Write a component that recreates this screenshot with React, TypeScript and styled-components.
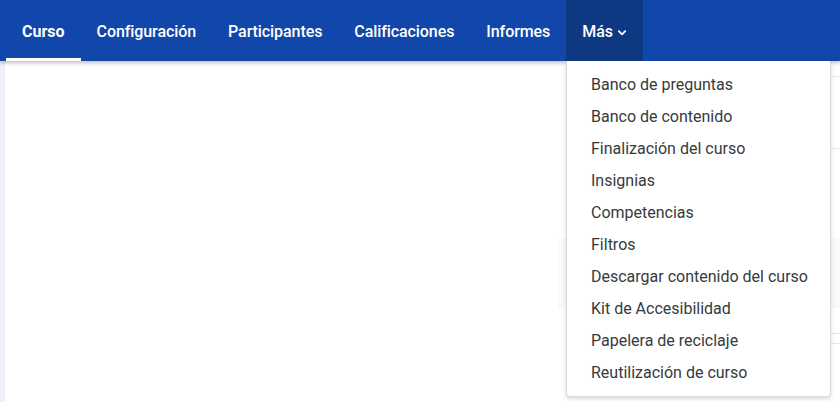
import React from "react";
import styled, { createGlobalStyle } from "styled-components";

const Global = createGlobalStyle`
  html, body { margin: 0; padding: 0; background: #fff; }
  body { font-family: Roboto, "Liberation Sans", sans-serif; }
  * { box-sizing: border-box; }
`;

const Page = styled.div`
  width: 840px;
  height: 402px;
  display: flex;
  flex-direction: column;
  overflow: hidden;
`;

const NavBar = styled.nav`
  height: 61px;
  background: #1147aa;
  display: flex;
  align-items: stretch;
  padding-left: 6px;
  position: relative;
  z-index: 2;
  box-shadow: 0 2px 4px rgba(0, 0, 0, 0.25);
`;

const Tab = styled.div<{ $active?: boolean; $open?: boolean }>`
  position: relative;
  display: flex;
  align-items: center;
  gap: 4px;
  padding: 1px 16px 0;
  color: #fff;
  font-size: 16px;
  letter-spacing: ${(p) => (p.$active ? "0" : "-0.08px")};
  font-weight: ${(p) => (p.$active ? 700 : 500)};
  background: ${(p) => (p.$open ? "#0e3882" : "transparent")};
  ${(p) =>
    p.$active &&
    `&::after {
      content: "";
      position: absolute;
      left: 0; right: 0; bottom: 0;
      height: 3px;
      background: #fff;
    }`}
`;

const Body = styled.div`
  flex: 1;
  display: flex;
  position: relative;
`;

const Strip = styled.div`
  width: 5px;
  background: #f0f1f6;
`;

const Content = styled.div`
  flex: 1;
  position: relative;
  background: #fff;
`;

const GreyBlock = styled.div`
  position: absolute;
  left: 553px;
  top: 177px;
  width: 282px;
  height: 70px;
  background: #f8f9fa;
`;

const Line = styled.div<{ $top: number }>`
  position: absolute;
  right: 0;
  width: 10px;
  top: ${(p) => p.$top}px;
  height: 1px;
  background: #e3e5e8;
`;

const Menu = styled.ul`
  position: absolute;
  left: 561px;
  top: 0;
  width: 265px;
  margin: 0;
  padding: 7px 0 8px;
  list-style: none;
  background: #fff;
  border: 1px solid rgba(0, 0, 0, 0.15);
  border-top: none;
  border-radius: 0 0 4px 4px;
  box-shadow: 0 2px 4px rgba(0, 0, 0, 0.15);
  z-index: 3;
`;

const Item = styled.li`
  height: 32px;
  display: flex;
  align-items: center;
  padding-left: 24px;
  font-size: 16px;
  color: #373a3c;
`;

const items = [
  "Banco de preguntas",
  "Banco de contenido",
  "Finalización del curso",
  "Insignias",
  "Competencias",
  "Filtros",
  "Descargar contenido del curso",
  "Kit de Accesibilidad",
  "Papelera de reciclaje",
  "Reutilización de curso",
];

const Chevron = () => (
  <svg width="10" height="10" viewBox="0 0 10 10" style={{ marginTop: 3 }}>
    <path d="M1.8 3.2 L5 6.4 L8.2 3.2" fill="none" stroke="#fff" strokeWidth="1.8" strokeLinecap="round" strokeLinejoin="round" />
  </svg>
);

export default function App() {
  return (
    <Page>
      <Global />
      <NavBar>
        <Tab $active>Curso</Tab>
        <Tab>Configuración</Tab>
        <Tab>Participantes</Tab>
        <Tab>Calificaciones</Tab>
        <Tab>Informes</Tab>
        <Tab $open>
          Más <Chevron />
        </Tab>
      </NavBar>
      <Body>
        <Strip />
        <Content>
          <GreyBlock />
          <Line $top={15} />
          <Line $top={87} />
          <Line $top={272} />
          <Line $top={282} />
          <Menu>
            {items.map((t) => (
              <Item key={t}>{t}</Item>
            ))}
          </Menu>
        </Content>
      </Body>
    </Page>
  );
}
